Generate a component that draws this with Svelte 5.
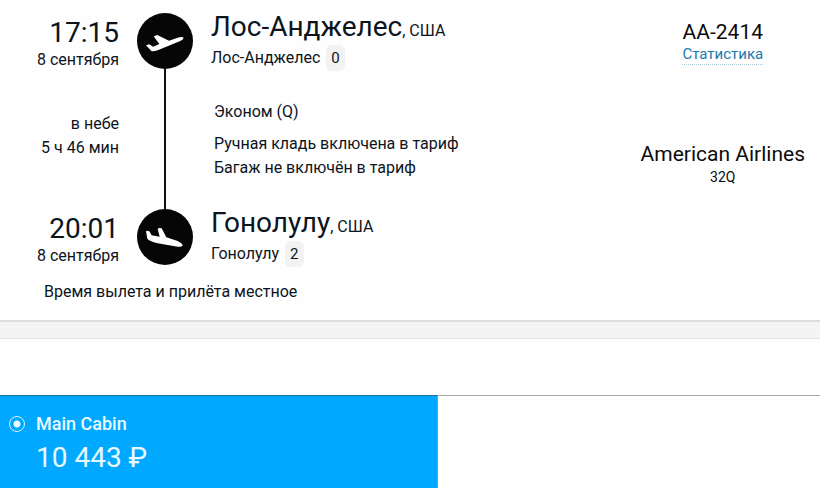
<script lang="ts">
  const departure = { time: '17:15', date: '8 сентября', city: 'Лос-Анджелес', country: 'США', airport: 'Лос-Анджелес', terminal: '0' };
  const arrival = { time: '20:01', date: '8 сентября', city: 'Гонолулу', country: 'США', airport: 'Гонолулу', terminal: '2' };
  const fares = [{ id: 'main', name: 'Main Cabin', price: '10 443 ₽' }];

  let fare = $state('main');
</script>

{#snippet when(point)}
  <div class="when">
    <time class="clock">{point.time}</time>
    <span>{point.date}</span>
  </div>
{/snippet}

{#snippet place(point)}
  <div class="place">
    <h2><span class="city">{point.city}</span>, {point.country}</h2>
    <p>{point.airport} <span class="terminal">{point.terminal}</span></p>
  </div>
{/snippet}

<section class="flight">
  <div class="route">
    {@render when(departure)}
    <svg class="plane" viewBox="0 0 168 168" aria-hidden="true">
      <circle cx="84" cy="84" r="84" fill="#060606" />
      <path fill="#fff" d="M27 97 37 94 48 101 67 93 51 71Q50 69 61 66L96 83 122 74Q137 70 140 74 139 80 128 85L64 111Q48 117 43 114Z" />
    </svg>
    {@render place(departure)}

    <div class="duration">
      <span>в небе</span>
      <span>5 ч 46 мин</span>
    </div>
    <div class="line"></div>
    <div class="tariff">
      <p class="cabin">Эконом (Q)</p>
      <p>Ручная кладь включена в тариф</p>
      <p>Багаж не включён в тариф</p>
    </div>

    {@render when(arrival)}
    <svg class="plane" viewBox="0 0 168 168" aria-hidden="true">
      <circle cx="84" cy="84" r="84" fill="#060606" />
      <path fill="#fff" d="M27 67Q29 64 37 67L44 79 68 83 62 60Q64 56 74 58L88 85 122 96Q136 103 137 109 134 115 122 113L62 103Q36 96 31 89Z" />
    </svg>
    {@render place(arrival)}
  </div>

  <aside class="carrier">
    <span class="big">AA-2414</span>
    <a href="#stats">Статистика</a>
    <div class="airline">
      <span class="big">American Airlines</span>
      <span class="craft">32Q</span>
    </div>
  </aside>

  <p class="note">Время вылета и прилёта местное</p>
</section>

<section class="fares">
  {#each fares as f}
    <label class="fare">
      <input type="radio" name="fare" value={f.id} bind:group={fare} />
      <span class="name">{f.name}</span>
      <span class="price">{f.price}</span>
    </label>
  {/each}
</section>

<style>
  :global(body) {
    margin: 0;
    background: #f4f4f4;
    color: #0c141c;
    font: 16px/24px Roboto, sans-serif;
  }
  h2,
  p {
    margin: 0;
    font-weight: 400;
  }
  .flight {
    display: grid;
    grid-template-columns: 1fr auto;
    padding: 13px 15px 16px 0;
    background: #fefefe;
    border-bottom: 2px solid #dedede;
  }
  .route {
    display: grid;
    grid-template-columns: 119px 56px 1fr;
    grid-template-rows: 56px 140px 56px;
    column-gap: 18px;
  }
  .when,
  .duration {
    display: flex;
    flex-direction: column;
    text-align: right;
  }
  .when {
    padding-top: 5px;
  }
  .clock {
    font-size: 28px;
    line-height: 30px;
  }
  .duration {
    padding-top: 43px;
  }
  .plane {
    display: block;
    width: 56px;
    height: 56px;
  }
  .line {
    justify-self: center;
    width: 2px;
    background: #101010;
  }
  h2 {
    font-size: 16px;
    line-height: 28px;
  }
  .city {
    font-size: 28px;
  }
  .place p {
    display: flex;
    align-items: center;
    gap: 6px;
    height: 26px;
  }
  .terminal {
    padding: 0 5px;
    border-radius: 6px;
    background: #f2f2f2;
    font-size: 15px;
    line-height: 26px;
  }
  .tariff {
    padding: 31px 0 0 3px;
  }
  .cabin {
    margin-bottom: 8px;
  }
  .carrier {
    display: flex;
    flex-direction: column;
    align-items: center;
    padding-top: 7px;
    color: #0c0c0c;
  }
  .big {
    font-size: 21px;
  }
  .carrier a {
    border-bottom: 1px dotted #a8c8dc;
    color: #2079ae;
    font-size: 15px;
    line-height: 20px;
    text-decoration: none;
  }
  .airline {
    display: flex;
    flex-direction: column;
    align-items: center;
    margin-top: 77px;
  }
  .craft {
    font-size: 14px;
    line-height: 22px;
  }
  .note {
    grid-column: 1 / -1;
    padding: 15px 0 0 44px;
  }
  .fares {
    display: grid;
    grid-template-columns: 438fr 382fr;
    margin-top: 16px;
    padding-top: 56px;
    border-top: 1px solid #e2e2e2;
    background: linear-gradient(#a8a8a8, #a8a8a8) 0 56px / 100% 1px no-repeat #fefefe;
  }
  .fare {
    display: grid;
    grid-template-columns: 16px 1fr;
    column-gap: 11px;
    align-items: center;
    padding: 16px 9px 11px;
    border-top: 1px solid #1c6f9c;
    border-right: 1px solid #5fa9cf;
    background: #00a8ff;
    color: #e8faff;
    cursor: pointer;
  }
  .fare input {
    appearance: none;
    width: 16px;
    height: 16px;
    margin: 0;
    border: 1px solid #d8f4ff;
    border-radius: 50%;
  }
  .fare input:checked {
    background: radial-gradient(circle, #e8faff 3px, transparent 4px);
  }
  .name {
    font-size: 18px;
    font-weight: 500;
  }
  .price {
    grid-column: 2;
    font-size: 28px;
    line-height: 44px;
  }
</style>
